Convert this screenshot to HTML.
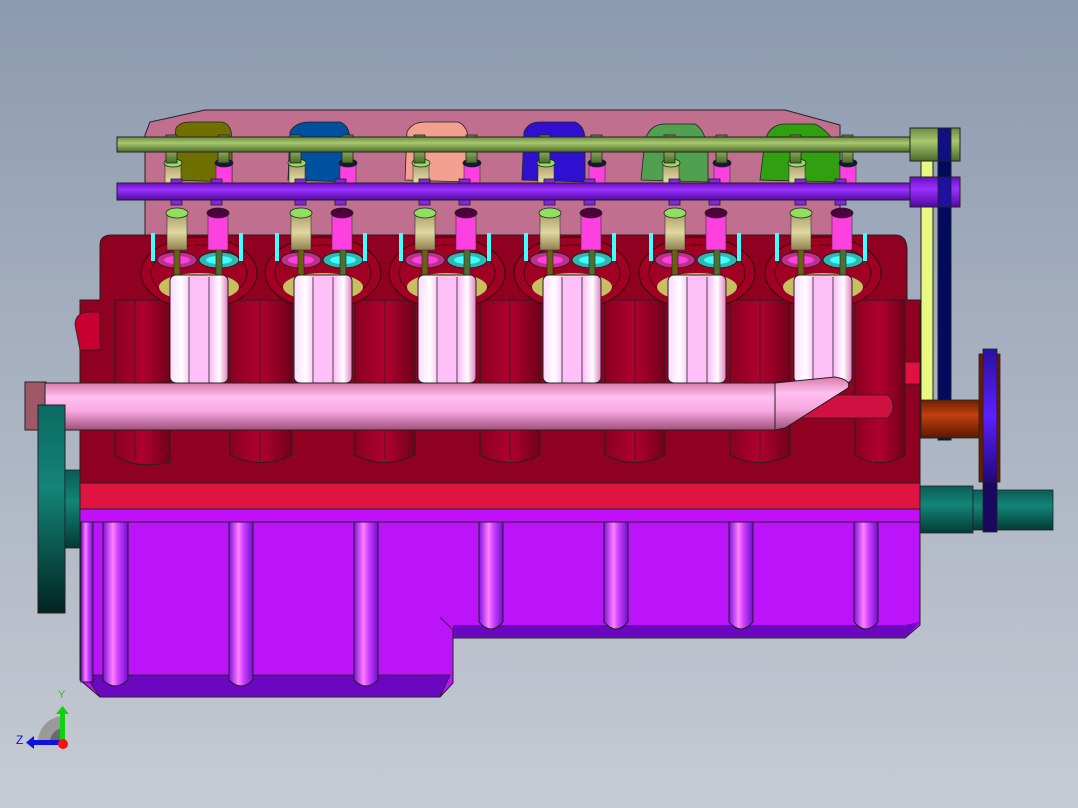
<!DOCTYPE html>
<html><head><meta charset="utf-8"><style>
html,body{margin:0;padding:0;width:1078px;height:808px;overflow:hidden}
body{background:linear-gradient(#8c9aaf 0%,#aab3c2 50%,#c6cbd3 100%)}
svg{position:absolute;left:0;top:0}
</style></head><body>
<svg width="1078" height="808" viewBox="0 0 1078 808" xmlns="http://www.w3.org/2000/svg" font-family="Liberation Sans, sans-serif">
<defs>
<linearGradient id="pipe" x1="0" y1="0" x2="0" y2="1"><stop offset="0" stop-color="#d87aa8"/><stop offset=".3" stop-color="#ffc0f0"/><stop offset=".6" stop-color="#f7a8e0"/><stop offset="1" stop-color="#a0507a"/></linearGradient>
<linearGradient id="runner" x1="0" y1="0" x2="1" y2="0"><stop offset="0" stop-color="#ffd8ff"/><stop offset=".2" stop-color="#fff"/><stop offset=".35" stop-color="#ffc0f8"/><stop offset=".7" stop-color="#ffc0f8"/><stop offset=".85" stop-color="#fff"/><stop offset="1" stop-color="#e080c0"/></linearGradient>
<linearGradient id="rib" x1="0" y1="0" x2="1" y2="0"><stop offset="0" stop-color="#8010e0"/><stop offset=".4" stop-color="#ff80ff"/><stop offset=".6" stop-color="#d040ff"/><stop offset="1" stop-color="#7010d0"/></linearGradient>
<linearGradient id="bore" x1="0" y1="0" x2="1" y2="0"><stop offset="0" stop-color="#8a0020"/><stop offset=".5" stop-color="#b00030"/><stop offset="1" stop-color="#70001a"/></linearGradient>
<linearGradient id="teal" x1="0" y1="0" x2="0" y2="1"><stop offset="0" stop-color="#0c6a62"/><stop offset=".4" stop-color="#138478"/><stop offset="1" stop-color="#022420"/></linearGradient>
<linearGradient id="teal2" x1="0" y1="0" x2="0" y2="1"><stop offset="0" stop-color="#0a5c55"/><stop offset=".4" stop-color="#138478"/><stop offset="1" stop-color="#033a34"/></linearGradient>
<linearGradient id="orange" x1="0" y1="0" x2="0" y2="1"><stop offset="0" stop-color="#702000"/><stop offset=".4" stop-color="#c04010"/><stop offset="1" stop-color="#5a1800"/></linearGradient>
<linearGradient id="blue" x1="0" y1="0" x2="0" y2="1"><stop offset="0" stop-color="#2a10a0"/><stop offset=".5" stop-color="#5a20ff"/><stop offset="1" stop-color="#200878"/></linearGradient>
<linearGradient id="gcam" x1="0" y1="0" x2="0" y2="1"><stop offset="0" stop-color="#6a8a40"/><stop offset=".4" stop-color="#a8c870"/><stop offset="1" stop-color="#4a6a28"/></linearGradient>
<linearGradient id="pcam" x1="0" y1="0" x2="0" y2="1"><stop offset="0" stop-color="#6a10c0"/><stop offset=".4" stop-color="#9a30ff"/><stop offset="1" stop-color="#5008a0"/></linearGradient>
<linearGradient id="spring" x1="0" y1="0" x2="0" y2="1"><stop offset="0" stop-color="#b0a070"/><stop offset=".5" stop-color="#e0d8a0"/><stop offset="1" stop-color="#908050"/></linearGradient>
<g id="cyl">
  <ellipse cx="0" cy="-2" rx="58" ry="36" fill="#a00024" stroke="#300" stroke-width="1"/>
  <ellipse cx="0" cy="-2" rx="48" ry="28" fill="none" stroke="#300" stroke-width=".8"/>
  <ellipse cx="-22" cy="-15" rx="20" ry="8" fill="#c0308a" stroke="#222" stroke-width="1"/>
  <ellipse cx="-22" cy="-15" rx="13" ry="4" fill="#ff40e0"/>
  <ellipse cx="20" cy="-15" rx="20" ry="8" fill="#30b8b0" stroke="#222" stroke-width="1"/>
  <ellipse cx="20" cy="-15" rx="13" ry="4" fill="#40ffff"/>
  <ellipse cx="0" cy="12" rx="40" ry="14" fill="#c8c060"/>
  <rect x="-25" y="-30" width="6" height="50" fill="#6a6010" stroke="#222" stroke-width=".6"/>
  <rect x="17" y="-30" width="6" height="50" fill="#507030" stroke="#222" stroke-width=".6"/>
  <rect x="-32" y="-60" width="20" height="35" fill="url(#spring)" stroke="#333" stroke-width=".6"/>
  <rect x="9" y="-60" width="20" height="35" fill="#ff40e0" stroke="#333" stroke-width=".6"/>
  <ellipse cx="-22" cy="-62" rx="11" ry="5" fill="#90e060" stroke="#222" stroke-width=".8"/>
  <ellipse cx="19" cy="-62" rx="11" ry="5" fill="#500040" stroke="#222" stroke-width=".8"/>
  <rect x="-34" y="-110" width="16" height="30" fill="url(#spring)" stroke="#333" stroke-width=".6"/>
  <rect x="17" y="-110" width="16" height="30" fill="#ff40e0" stroke="#333" stroke-width=".6"/>
  <ellipse cx="-26" cy="-112" rx="9" ry="4" fill="#90e060" stroke="#222" stroke-width=".8"/>
  <ellipse cx="25" cy="-112" rx="9" ry="4" fill="#101840" stroke="#222" stroke-width=".8"/>
  <rect x="-48" y="-42" width="4" height="28" fill="#40ffff"/>
  <rect x="40" y="-42" width="4" height="28" fill="#40ffff"/>
  <rect x="-33" y="-140" width="11" height="28" fill="url(#gcam)" stroke="#222" stroke-width=".8"/>
  <rect x="19" y="-140" width="11" height="28" fill="url(#gcam)" stroke="#222" stroke-width=".8"/>
  <rect x="-28" y="-96" width="11" height="26" fill="#8a20f0" stroke="#222" stroke-width=".8"/>
  <rect x="12" y="-96" width="11" height="26" fill="#8a20f0" stroke="#222" stroke-width=".8"/>
  <rect x="-29" y="0" width="58" height="108" rx="6" fill="url(#runner)" stroke="#222" stroke-width="1"/>
  <line x1="-10" y1="2" x2="-10" y2="108" stroke="#222" stroke-width=".8"/>
  <line x1="10" y1="2" x2="10" y2="108" stroke="#222" stroke-width=".8"/>
</g>
</defs>

<path d="M145 135 L150 122 L205 110 L785 110 L840 125 L840 235 L145 235 Z" fill="#c0708e" stroke="#222" stroke-width="1"/>
<path d="M170 180 L176 128 Q180 122 190 122 L222 122 Q232 124 232 140 L232 182 Z" fill="#707000" stroke="#222" stroke-width=".8"/>
<path d="M288 180 L290 132 Q295 122 310 122 L340 122 Q350 126 350 140 L350 182 Z" fill="#0050a0" stroke="#222" stroke-width=".8"/>
<path d="M405 180 L407 132 Q412 122 425 122 L458 122 Q468 126 468 140 L468 182 Z" fill="#f4a090" stroke="#222" stroke-width=".8"/>
<path d="M522 180 L524 132 Q528 122 540 122 L575 122 Q585 126 585 140 L585 182 Z" fill="#3010d0" stroke="#222" stroke-width=".8"/>
<path d="M641 180 L645 140 Q650 124 665 124 L695 124 Q705 130 708 150 L708 182 Z" fill="#50a050" stroke="#222" stroke-width=".8"/>
<path d="M760 180 L765 140 Q770 124 785 124 L815 124 Q828 130 840 150 L840 182 Z" fill="#30a010" stroke="#222" stroke-width=".8"/>

<rect x="921" y="128" width="12" height="310" fill="#e8f880" stroke="#222" stroke-width="1"/>
<rect x="938" y="128" width="13" height="312" fill="#000a60" stroke="#222" stroke-width="1"/>

<path d="M100 245 Q100 235 112 235 L895 235 Q907 235 907 250 L907 300 L920 300 L920 483 L80 483 L80 300 L100 300 Z" fill="#900020" stroke="#222" stroke-width="1"/>
<rect x="905" y="362" width="15" height="22" fill="#e01040" stroke="#222" stroke-width=".8"/>
<g fill="url(#bore)" stroke="#222" stroke-width="1">
<path d="M115 300 L115 455 Q135 470 170 462 L170 300 Z"/>
<path d="M230 300 L230 455 Q260 470 292 455 L292 300 Z"/>
<path d="M355 300 L355 455 Q385 470 415 455 L415 300 Z"/>
<path d="M480 300 L480 455 Q510 470 540 455 L540 300 Z"/>
<path d="M605 300 L605 455 Q635 470 665 455 L665 300 Z"/>
<path d="M730 300 L730 455 Q760 470 790 455 L790 300 Z"/>
<path d="M855 300 L855 455 Q880 470 905 455 L905 300 Z"/>
</g>
<g stroke="#222" stroke-width=".8">
<line x1="135" y1="300" x2="135" y2="460"/><line x1="260" y1="300" x2="260" y2="460"/><line x1="385" y1="300" x2="385" y2="460"/><line x1="510" y1="300" x2="510" y2="460"/><line x1="635" y1="300" x2="635" y2="460"/><line x1="760" y1="300" x2="760" y2="460"/>
</g>
<path d="M75 325 Q75 312 90 312 L100 312 L100 350 L80 350 Z" fill="#c80030" stroke="#222" stroke-width=".8"/>

<use href="#cyl" x="199" y="275"/>
<use href="#cyl" x="323" y="275"/>
<use href="#cyl" x="447" y="275"/>
<use href="#cyl" x="572" y="275"/>
<use href="#cyl" x="697" y="275"/>
<use href="#cyl" x="823" y="275"/>

<rect x="117" y="137" width="843" height="15" fill="url(#gcam)" stroke="#222" stroke-width="1"/>
<rect x="910" y="128" width="50" height="33" fill="url(#gcam)" stroke="#222" stroke-width="1"/>
<rect x="117" y="183" width="843" height="17" fill="url(#pcam)" stroke="#222" stroke-width="1"/>
<rect x="910" y="177" width="50" height="30" fill="url(#pcam)" stroke="#222" stroke-width="1"/>
<rect x="938" y="128" width="13" height="33" fill="#101080" stroke="#222" stroke-width=".8"/>
<rect x="938" y="177" width="13" height="30" fill="#2010a0" stroke="#222" stroke-width=".8"/>

<path d="M790 395 L888 395 Q898 406 888 418 L790 418 Z" fill="#d01040" stroke="#222" stroke-width=".8"/>

<rect x="25" y="382" width="21" height="48" fill="#a05868" stroke="#222" stroke-width="1"/>
<rect x="45" y="383" width="730" height="47" fill="url(#pipe)" stroke="#222" stroke-width="1"/>
<path d="M775 383 L835 377 Q852 380 848 388 L785 428 L775 430 Z" fill="url(#pipe)" stroke="#222" stroke-width="1"/>

<rect x="38" y="405" width="27" height="208" fill="url(#teal)" stroke="#222" stroke-width="1"/>
<rect x="65" y="470" width="15" height="78" fill="url(#teal2)" stroke="#222" stroke-width=".8"/>

<rect x="921" y="400" width="60" height="38" fill="url(#orange)" stroke="#222" stroke-width=".8"/>
<rect x="979" y="354" width="21" height="128" fill="#701800" stroke="#222" stroke-width=".8"/>
<rect x="983" y="349" width="14" height="133" fill="url(#blue)" stroke="#222" stroke-width=".8"/>
<rect x="920" y="486" width="53" height="47" fill="url(#teal2)" stroke="#222" stroke-width=".8"/>
<rect x="973" y="490" width="80" height="40" fill="url(#teal2)" stroke="#222" stroke-width=".8"/>
<rect x="983" y="482" width="14" height="50" fill="#1a0860" stroke="#222" stroke-width=".8"/>

<rect x="80" y="483" width="840" height="26" fill="#e01440" stroke="#222" stroke-width="1"/>
<rect x="80" y="509" width="840" height="13" fill="#c010f8" stroke="#222" stroke-width="1"/>

<path d="M80 522 L920 522 L920 625 L905 638 L453 638 L453 683 L440 697 L100 697 L80 680 Z" fill="#bc14fa" stroke="#222" stroke-width="1"/>
<path d="M453 625 L905 625 L920 622 L905 638 L453 638 Z" fill="#6a08c0"/>
<path d="M85 675 L450 675 L440 697 L100 697 Z" fill="#6a08c0" stroke="#222" stroke-width=".8"/>
<path d="M440 617 L453 630 L453 683" fill="none" stroke="#222" stroke-width="1"/>
<g fill="url(#rib)" stroke="#222" stroke-width="1">
<rect x="81" y="522" width="12" height="160"/>
<path d="M103 522 L128 522 L128 680 Q115 692 103 680 Z"/>
<path d="M229 522 L253 522 L253 680 Q241 692 229 680 Z"/>
<path d="M354 522 L378 522 L378 680 Q366 692 354 680 Z"/>
<path d="M479 522 L503 522 L503 622 Q491 636 479 622 Z"/>
<path d="M604 522 L628 522 L628 622 Q616 636 604 622 Z"/>
<path d="M729 522 L753 522 L753 622 Q741 636 729 622 Z"/>
<path d="M854 522 L878 522 L878 622 Q866 636 854 622 Z"/>
</g>

<path d="M38 742 A26 26 0 0 1 64 716 L64 742 Z" fill="#9a9a9a"/>
<path d="M50 742 A14 14 0 0 1 64 728 L64 742 Z" fill="#6a6a6a"/>
<rect x="60" y="712" width="5" height="31" fill="#10d010"/>
<path d="M56 714 L62.5 706 L69 714 Z" fill="#10d010"/>
<rect x="32" y="740" width="30" height="5" fill="#1010e0"/>
<path d="M34 736 L26 742.5 L34 749 Z" fill="#1010e0"/>
<circle cx="63" cy="744" r="5" fill="#ff1010"/>
<text x="58" y="698" font-size="11" fill="#10d010">Y</text>
<text x="16" y="744" font-size="12" fill="#1010e0">Z</text>
</svg>
</body></html>
